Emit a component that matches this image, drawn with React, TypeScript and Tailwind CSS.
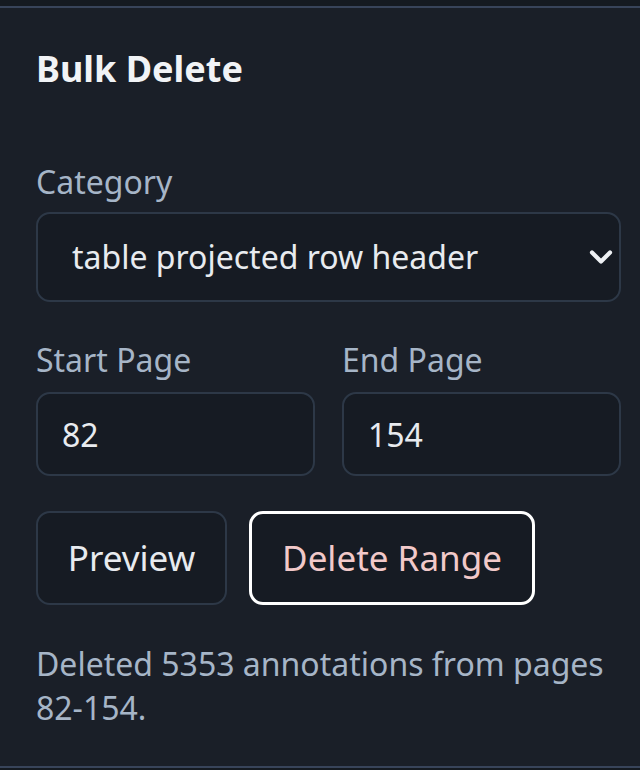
import { ChevronDown } from 'lucide-react';

export default function App() {
  return (
    <div className="min-h-screen bg-[#151a21] pt-[6px] pb-[2px] font-['Noto_Sans',sans-serif]">
      <section className="h-[762px] border-y-2 border-[#38445a] bg-[#1a1f28] pl-[36px] pr-[19px] pt-[37px]">
        <h2 className="text-[36px] leading-[48px] font-bold text-[#f1f3f6]">Bulk Delete</h2>

        <div className="mt-[67px]">
          <label className="block text-[32px] leading-[44px] text-[#a6b5c7]">Category</label>
          <div className="relative mt-[8px]">
            <select
              defaultValue="table projected row header"
              className="h-[90px] w-full appearance-none rounded-[14px] border-2 border-[#2d3847] bg-[#161b23] pl-[34px] text-[32px] text-[#e8ebef] outline-none"
            >
              <option>table projected row header</option>
            </select>
            <ChevronDown
              className="pointer-events-none absolute right-[2px] top-1/2 h-[36px] w-[36px] -translate-y-1/2 text-[#eef1f4]"
              strokeWidth={2.8}
            />
          </div>
        </div>

        <div className="mt-[36px] grid grid-cols-2 gap-[27px]">
          <div>
            <label className="block text-[32px] leading-[44px] text-[#a6b5c7]">Start Page</label>
            <input
              defaultValue="82"
              className="mt-[10px] h-[84px] w-full rounded-[14px] border-2 border-[#2d3847] bg-[#161b23] px-[24px] text-[32px] text-[#e8ebef] outline-none"
            />
          </div>
          <div>
            <label className="block text-[32px] leading-[44px] text-[#a6b5c7]">End Page</label>
            <input
              defaultValue="154"
              className="mt-[10px] h-[84px] w-full rounded-[14px] border-2 border-[#2d3847] bg-[#161b23] px-[24px] text-[32px] text-[#e8ebef] outline-none"
            />
          </div>
        </div>

        <div className="mt-[35px] flex gap-[22px]">
          <button className="h-[94px] w-[191px] rounded-[14px] border-2 border-[#2d3847] bg-[#161b23] text-[35px] text-[#e8ebef]">
            Preview
          </button>
          <button className="h-[94px] w-[286px] rounded-[14px] border-[3px] border-white bg-[#161b23] text-[35px] text-[#f2c9c9]">
            Delete Range
          </button>
        </div>

        <p className="mt-[37px] text-[32px] leading-[44px] text-[#a6b5c7]">
          Deleted 5353 annotations from pages 82-154.
        </p>
      </section>
    </div>
  );
}
